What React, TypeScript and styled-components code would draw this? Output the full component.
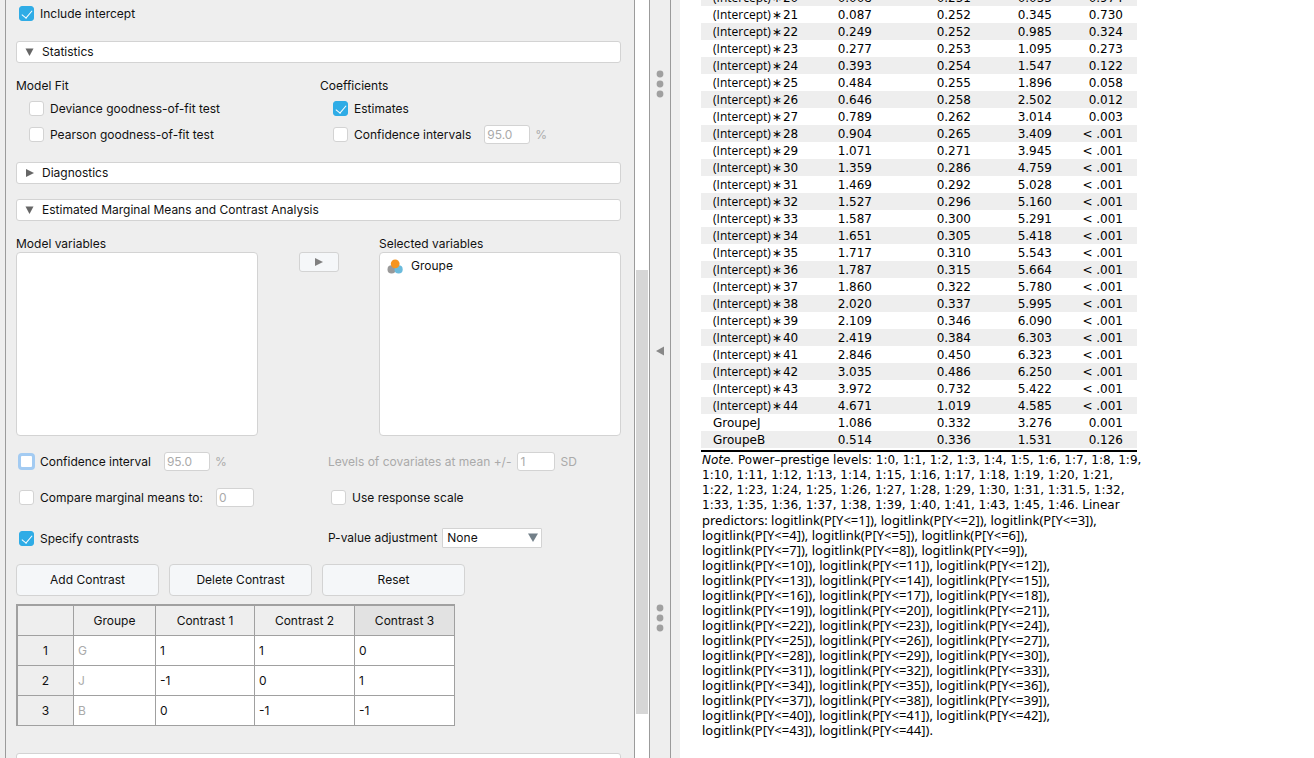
import React from "react";
import styled, { createGlobalStyle, css } from "styled-components";

const GlobalStyle = createGlobalStyle`
  * { box-sizing: border-box; }
  body {
    margin: 0;
    background: #fff;
    color: #111;
    font-family: Inter, "Liberation Sans", sans-serif;
    font-size: 12px;
    line-height: 16px;
  }
  input, button, select { font: inherit; color: inherit; margin: 0; }
`;

const Workspace = styled.div`
  display: grid;
  grid-template-columns: minmax(0, 650fr) 21px minmax(0, 643fr);
  height: 100vh;
  overflow: hidden;
`;

/* ---------- analysis form ---------- */

const FormPane = styled.section`
  display: flex;
  min-width: 0;
  overflow: hidden;
  padding-left: 5px;
  background: #eee;
  border-right: 1px solid #9b9b9b;
`;

const FormBody = styled.form`
  flex: 1;
  min-width: 0;
  padding: 0 13px 0 10px;
  border-left: 1px solid #9b9b9b;
  border-right: 1px solid #9b9b9b;
`;

const ScrollTrack = styled.div`
  flex: 0 0 14px;
  padding: 270px 1px 0;
  background: #fff;
`;

const ScrollThumb = styled.div`
  height: 444px;
  background: #d6d6d6;
`;

const Expander = styled.button<{ $gap: number }>`
  display: flex;
  align-items: center;
  gap: 7px;
  width: 100%;
  height: 22px;
  margin-top: ${(p) => p.$gap}px;
  padding: 0 8px;
  background: #fff;
  border: 1px solid #d3d3d3;
  border-radius: 3px;
  text-align: left;
`;

const Columns = styled.div<{ $split: string; $gap: number }>`
  display: grid;
  grid-template-columns: ${(p) => p.$split};
  align-items: start;
  margin-top: ${(p) => p.$gap}px;
`;

const Row = styled.div<{ $height: number; $indent?: number }>`
  display: flex;
  align-items: center;
  height: ${(p) => p.$height}px;
  padding-left: ${(p) => p.$indent ?? 0}px;
  white-space: nowrap;
`;

const Group = styled.fieldset`
  min-width: 0;
  margin: 0;
  padding: 0;
  border: 0;
  ${Row} + ${Row} {
    margin-top: 1px;
  }
`;

const GroupTitle = styled.legend`
  height: 19px;
  padding: 0;
  line-height: 18px;
`;

const CheckLabel = styled.label`
  display: flex;
  align-items: center;
  gap: 6px;
`;

const CheckBox = styled.input<{ $focus?: boolean }>`
  appearance: none;
  display: grid;
  place-items: center;
  flex: none;
  width: 15px;
  height: 15px;
  background: #fff;
  border: 1px solid #d3d3d3;
  border-radius: 3px;
  ${(p) =>
    p.$focus &&
    css`
      border: 2px solid #a3cbf2;
      box-shadow: 0 0 0 1px #a3cbf2;
    `}
  &:checked {
    background: #2face6;
    border-color: #2face6;
  }
  &:checked::after {
    content: "";
    width: 5px;
    height: 9px;
    margin-bottom: 2px;
    border: solid #fff;
    border-width: 0 1px 1px 0;
    transform: rotate(40deg);
  }
`;

const Field = styled.input<{ $width: number; $gap: number }>`
  width: ${(p) => p.$width}px;
  height: 19px;
  margin-left: ${(p) => p.$gap}px;
  margin-right: 5px;
  padding: 0 2px;
  background: #fff;
  border: 1px solid #d3d3d3;
  border-radius: 3px;
  color: #aaa;
`;

const Faded = styled.label`
  color: #aaa;
`;

const Select = styled.div`
  position: relative;
  margin-left: 5px;
  select {
    appearance: none;
    display: block;
    width: 100px;
    height: 20px;
    padding: 0 4px;
    background: #fff;
    border: 1px solid #d3d3d3;
    border-radius: 1px;
  }
  svg {
    position: absolute;
    right: 4px;
    top: 5px;
    pointer-events: none;
  }
`;

const Assign = styled.div`
  display: grid;
  grid-template-columns: minmax(0, 1fr) 121px minmax(0, 1fr);
  margin-top: 14px;
`;

const ListTitle = styled.h3`
  height: 17px;
  margin: 0;
  font-size: 12px;
  font-weight: 400;
  line-height: 18px;
`;

const VariableList = styled.ul`
  height: 184px;
  margin: 0;
  padding: 4px 7px;
  list-style: none;
  background: #fff;
  border: 1px solid #d3d3d3;
  border-radius: 4px;
`;

const Variable = styled.li`
  display: flex;
  align-items: center;
  gap: 8px;
  height: 18px;
`;

const MoveButton = styled.button`
  display: grid;
  place-items: center;
  width: 40px;
  height: 20px;
  margin: 17px auto 0;
  padding: 0;
  background: #f5f7f9;
  border: 1px solid #d3d3d3;
  border-radius: 3px;
`;

const ButtonBar = styled.div`
  display: flex;
  gap: 10px;
  margin: 15px 0 8px;
`;

const PushButton = styled.button`
  width: 143px;
  height: 32px;
  background: #f5f7f9;
  border: 1px solid #d3d3d3;
  border-radius: 4px;
`;

const ContrastTable = styled.table`
  width: 439px;
  table-layout: fixed;
  border-collapse: separate;
  border-spacing: 0;
  border: solid #a0a0a0;
  border-width: 2px 0 0 2px;
  background: #fff;
  th,
  td {
    height: 30px;
    padding: 0 4px;
    border: solid #a0a0a0;
    border-width: 0 1px 1px 0;
    font-weight: 400;
    text-align: left;
  }
  th {
    background: #eee;
    text-align: center;
  }
  th.current {
    background: #e2e2e2;
  }
  td.level {
    color: #aaa;
  }
`;

/* ---------- splitter ---------- */

const Splitter = styled.div`
  display: flex;
  flex-direction: column;
  justify-content: space-between;
  align-items: center;
  padding: 70px 0 126px;
  background: #eee;
  border-right: 1px solid #9b9b9b;
`;

/* ---------- results ---------- */

const Results = styled.main`
  min-width: 0;
  overflow: hidden;
  padding-left: 21px;
  border-left: 9px solid #f0f0f0;
  color: #000;
  font-family: "DejaVu Sans", sans-serif;
`;

const ResultTable = styled.table`
  width: 436px;
  margin-top: -11px;
  table-layout: fixed;
  border-collapse: separate;
  border-spacing: 0;
  border-bottom: 2px solid #000;
  padding-bottom: 2px;
  th,
  td {
    height: 17px;
    padding: 2px 0 0;
    font-weight: 400;
    line-height: 15px;
    text-align: right;
    white-space: nowrap;
  }
  th {
    padding-left: 12px;
    text-align: left;
  }
  td:last-child {
    padding-right: 14px;
  }
  tr:nth-child(odd) {
    background: #eee;
  }
`;

const Term = styled.span`
  font-family: "Open Sans", sans-serif;
  line-height: 1px;
`;

const Star = styled.span`
  margin: 0 1px;
`;

const Note = styled.p`
  width: 436px;
  margin: 1px 0 0;
  padding-left: 1px;
  font-size: 12px;
  line-height: 15px;
  white-space: nowrap;
  span {
    display: block;
  }
`;

const Formula = styled.span`
  font-family: "Noto Sans", sans-serif;
  font-size: 13px;
`;

const Triangle = ({ d, size = 10, fill = "#666" }: { d: string; size?: number; fill?: string }) => (
  <svg width={size} height={size} viewBox="0 0 10 10" aria-hidden="true">
    <path d={d} fill={fill} />
  </svg>
);

const DOWN = "M0.5 1.5H8.5L4.5 9Z";
const RIGHT = "M1 1V9L9 5Z";
const LEFT = "M9 0.5V9.5L1 5Z";

const Grip = () => (
  <svg width="8" height="28" viewBox="0 0 8 28" aria-hidden="true">
    {[4, 14, 24].map((y) => (
      <circle key={y} cx="4" cy={y} r="3.4" fill="#a0a0a0" />
    ))}
  </svg>
);

const NominalIcon = () => (
  <svg width="16" height="16" viewBox="0 0 16 16" aria-hidden="true">
    <circle cx="4.6" cy="11.4" r="4.1" fill="#999" />
    <circle cx="11.6" cy="11.4" r="4.1" fill="#6bbbdc" />
    <circle cx="8.2" cy="5.8" r="4.4" fill="#f7941d" />
  </svg>
);

type CheckProps = { label: string; checked?: boolean; focus?: boolean };

const Check = ({ label, checked, focus }: CheckProps) => (
  <CheckLabel>
    <CheckBox type="checkbox" defaultChecked={checked} $focus={focus} />
    {label}
  </CheckLabel>
);

const rows = `20 0.008 0.251 0.033 0.974
21 0.087 0.252 0.345 0.730
22 0.249 0.252 0.985 0.324
23 0.277 0.253 1.095 0.273
24 0.393 0.254 1.547 0.122
25 0.484 0.255 1.896 0.058
26 0.646 0.258 2.502 0.012
27 0.789 0.262 3.014 0.003
28 0.904 0.265 3.409 <
29 1.071 0.271 3.945 <
30 1.359 0.286 4.759 <
31 1.469 0.292 5.028 <
32 1.527 0.296 5.160 <
33 1.587 0.300 5.291 <
34 1.651 0.305 5.418 <
35 1.717 0.310 5.543 <
36 1.787 0.315 5.664 <
37 1.860 0.322 5.780 <
38 2.020 0.337 5.995 <
39 2.109 0.346 6.090 <
40 2.419 0.384 6.303 <
41 2.846 0.450 6.323 <
42 3.035 0.486 6.250 <
43 3.972 0.732 5.422 <
44 4.671 1.019 4.585 <
GroupeJ 1.086 0.332 3.276 0.001
GroupeB 0.514 0.336 1.531 0.126`
  .split("\n")
  .map((line) => line.split(" "));

const levelLines = [
  "1:10, 1:11, 1:12, 1:13, 1:14, 1:15, 1:16, 1:17, 1:18, 1:19, 1:20, 1:21,",
  "1:22, 1:23, 1:24, 1:25, 1:26, 1:27, 1:28, 1:29, 1:30, 1:31, 1:31.5, 1:32,",
  "1:33, 1:35, 1:36, 1:37, 1:38, 1:39, 1:40, 1:41, 1:43, 1:45, 1:46. Linear",
];

const link = (n: number) => `logitlink(P[Y<=${n}])`;
const linkLines = Array.from({ length: 15 }, (_, i) => {
  const group = [3 * i + 1, 3 * i + 2, 3 * i + 3].filter((n) => n <= 44);
  return (i === 0 ? "predictors: " : "") + group.map(link).join(", ") + (i === 14 ? "." : ",");
});

const contrasts = [
  ["G", "1", "1", "0"],
  ["J", "-1", "0", "1"],
  ["B", "0", "-1", "-1"],
];

export default function App() {
  return (
    <>
      <GlobalStyle />
      <Workspace>
        <FormPane>
          <FormBody>
            <Row $height={27} $indent={3}>
              <Check label="Include intercept" checked />
            </Row>

            <Expander type="button" $gap={14}>
              <Triangle d={DOWN} />
              Statistics
            </Expander>
            <Columns $split="304fr 301fr" $gap={14}>
              <Group>
                <GroupTitle>Model Fit</GroupTitle>
                <Row $height={25} $indent={13}>
                  <Check label="Deviance goodness-of-fit test" />
                </Row>
                <Row $height={25} $indent={13}>
                  <Check label="Pearson goodness-of-fit test" />
                </Row>
              </Group>
              <Group>
                <GroupTitle>Coefficients</GroupTitle>
                <Row $height={25} $indent={13}>
                  <Check label="Estimates" checked />
                </Row>
                <Row $height={25} $indent={13}>
                  <Check label="Confidence intervals" />
                  <Field id="coef-ci" $width={46} $gap={13} defaultValue="95.0" disabled />
                  <Faded htmlFor="coef-ci">%</Faded>
                </Row>
              </Group>
            </Columns>

            <Expander type="button" $gap={15}>
              <Triangle d={RIGHT} />
              Diagnostics
            </Expander>
            <Expander type="button" $gap={15}>
              <Triangle d={DOWN} />
              Estimated Marginal Means and Contrast Analysis
            </Expander>

            <Assign>
              <div>
                <ListTitle>Model variables</ListTitle>
                <VariableList />
              </div>
              <MoveButton type="button" aria-label="Move variable">
                <Triangle d={RIGHT} fill="#808080" />
              </MoveButton>
              <div>
                <ListTitle>Selected variables</ListTitle>
                <VariableList>
                  <Variable>
                    <NominalIcon />
                    Groupe
                  </Variable>
                </VariableList>
              </div>
            </Assign>

            <Columns $split="312fr 293fr" $gap={16}>
              <Row $height={19} $indent={3}>
                <Check label="Confidence interval" focus />
                <Field id="means-ci" $width={46} $gap={13} defaultValue="95.0" disabled />
                <Faded htmlFor="means-ci">%</Faded>
              </Row>
              <Row $height={19}>
                <Faded htmlFor="sd">Levels of covariates at mean +/-</Faded>
                <Field id="sd" $width={38} $gap={6} defaultValue="1" disabled />
                <Faded htmlFor="sd">SD</Faded>
              </Row>
            </Columns>
            <Columns $split="312fr 293fr" $gap={17}>
              <Row $height={19} $indent={3}>
                <Check label="Compare marginal means to:" />
                <Field aria-label="Compare to" $width={38} $gap={13} defaultValue="0" disabled />
              </Row>
              <Row $height={19} $indent={3}>
                <Check label="Use response scale" />
              </Row>
            </Columns>
            <Columns $split="312fr 293fr" $gap={21}>
              <Row $height={21} $indent={3}>
                <Check label="Specify contrasts" checked />
              </Row>
              <Row $height={20}>
                <label htmlFor="adjustment">P-value adjustment</label>
                <Select>
                  <select id="adjustment" defaultValue="None">
                    <option>None</option>
                  </select>
                  <Triangle d="M0 0.5H10L5 9Z" fill="#738089" />
                </Select>
              </Row>
            </Columns>

            <ButtonBar>
              <PushButton type="button">Add Contrast</PushButton>
              <PushButton type="button">Delete Contrast</PushButton>
              <PushButton type="button">Reset</PushButton>
            </ButtonBar>

            <ContrastTable>
              <colgroup>
                <col style={{ width: 56 }} />
                <col style={{ width: 82 }} />
                <col style={{ width: 99 }} />
                <col style={{ width: 100 }} />
                <col style={{ width: 100 }} />
              </colgroup>
              <thead>
                <tr>
                  <th aria-label="Row" />
                  <th>Groupe</th>
                  <th>Contrast 1</th>
                  <th>Contrast 2</th>
                  <th className="current">Contrast 3</th>
                </tr>
              </thead>
              <tbody>
                {contrasts.map(([level, ...values], i) => (
                  <tr key={level}>
                    <th>{i + 1}</th>
                    <td className="level">{level}</td>
                    {values.map((v, j) => (
                      <td key={j}>{v}</td>
                    ))}
                  </tr>
                ))}
              </tbody>
            </ContrastTable>

            <Expander type="button" $gap={27} aria-label="Next section" />
          </FormBody>
          <ScrollTrack>
            <ScrollThumb />
          </ScrollTrack>
        </FormPane>

        <Splitter>
          <Grip />
          <Triangle d={LEFT} fill="#888" />
          <Grip />
        </Splitter>

        <Results>
          <ResultTable>
            <colgroup>
              <col style={{ width: 115 }} />
              <col style={{ width: 56 }} />
              <col style={{ width: 99 }} />
              <col style={{ width: 81 }} />
              <col style={{ width: 85 }} />
            </colgroup>
            <tbody>
              {rows.map(([name, est, se, z, p]) => (
                <tr key={name}>
                  <th scope="row">
                    {name.startsWith("G") ? (
                      name
                    ) : (
                      <>
                        <Term>(Intercept)</Term>
                        <Star>∗</Star>
                        {name}
                      </>
                    )}
                  </th>
                  <td>{est}</td>
                  <td>{se}</td>
                  <td>{z}</td>
                  <td>{p === "<" ? "< .001" : p}</td>
                </tr>
              ))}
            </tbody>
          </ResultTable>
          <Note>
            <span>
              <em>Note.</em> Power–prestige levels: 1:0, 1:1, 1:2, 1:3, 1:4, 1:5, 1:6, 1:7, 1:8, 1:9,
            </span>
            {levelLines.map((line) => (
              <span key={line}>{line}</span>
            ))}
            {linkLines.map((line) => (
              <Formula key={line}>{line}</Formula>
            ))}
          </Note>
        </Results>
      </Workspace>
    </>
  );
}
